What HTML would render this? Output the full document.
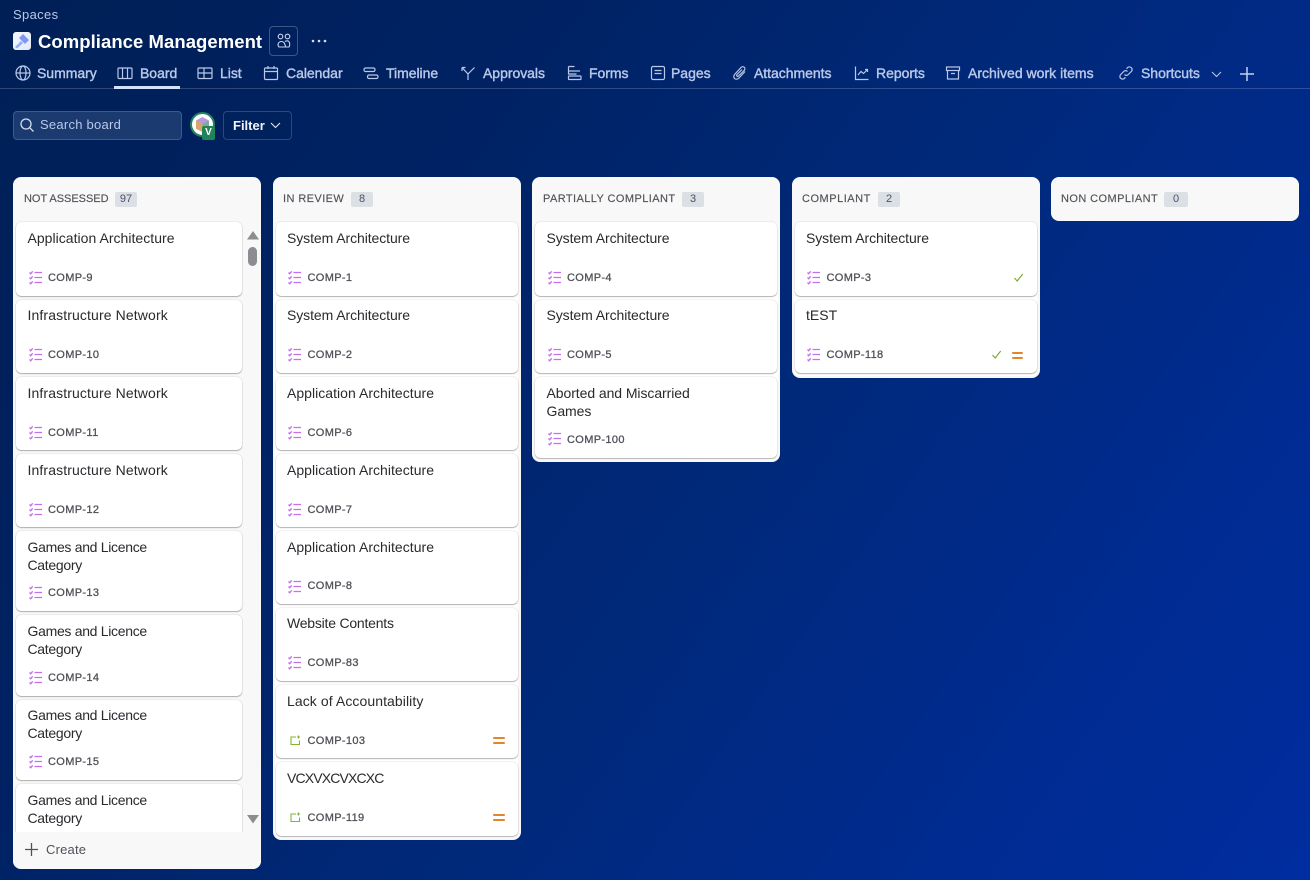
<!DOCTYPE html>
<html><head><meta charset="utf-8">
<style>
*{box-sizing:border-box;margin:0;padding:0}
html,body{width:1310px;height:880px;overflow:hidden}
body{position:relative;background:linear-gradient(125deg,#001f56 0%,#002263 28%,#00297a 55%,#002b90 80%,#002da0 100%);font-family:"Liberation Sans",sans-serif}
.a{position:absolute;white-space:nowrap}
.nav{position:absolute;top:64px;height:18px;line-height:18px;font-size:14px;font-weight:400;color:#b9c8e8;-webkit-text-stroke:.4px #b9c8e8;letter-spacing:-.03px;white-space:nowrap}
.ni{position:absolute;top:65px;width:16px;height:16px;fill:none;stroke:#b9c8e8;stroke-width:1.2}
.col{position:absolute;top:177px;width:248px;background:#f8f8f8;border-radius:8px}
.h{position:absolute;top:193px;height:12px;line-height:12px;font-size:11px;color:#505258;white-space:nowrap;letter-spacing:.42px;-webkit-text-stroke:.15px #505258}
.b{position:absolute;top:192px;height:15px;line-height:15px;border-radius:2px;background:#dcdfe4;color:#44546f;font-size:11px;text-align:center}
.c{position:absolute;background:#fff;border-radius:5px;box-shadow:0 1px 1px #00000045,0 0 1px #0000004f}
.t{position:absolute;left:11.5px;top:7px;line-height:18px;font-size:14px;color:#292a2e;letter-spacing:.03px;white-space:nowrap}
.t.u{top:6px}
.t.g{letter-spacing:-.3px}
.t.s{letter-spacing:-.08px}
.t.f{letter-spacing:.12px}
.id{position:absolute;left:32px;margin-top:1px;line-height:14px;font-size:11px;color:#505258;letter-spacing:.35px;-webkit-text-stroke:.3px #505258;white-space:nowrap}
.ic{position:absolute;left:11.5px;width:15px;height:15px;fill:none;stroke:#c470ee;stroke-width:1.35}
.st{position:absolute;left:14px;width:12px;height:12px;fill:none;stroke:#82b536;stroke-width:1.1}
.pr{position:absolute;width:11.500px;height:8px}
.pr:before,.pr:after{content:"";position:absolute;left:0;right:0;height:2px;background:#e2862d;border-radius:1px}
.pr:before{top:0}.pr:after{top:5px}
.ck{position:absolute;width:12px;height:12px;fill:none;stroke:#7da32f;stroke-width:1.1}
</style></head><body>
<svg width="0" height="0" style="position:absolute"><defs>
<g id="cl"><path d="M1.500 2.500l1.200 1.200 2-2.400M1.500 7.500l1.200 1.200 2-2.400M1.500 12.500l1.200 1.200 2-2.400M6.500 2.500h7.500M6.500 7.500h7.500M6.500 12.500h7.500"/></g>
<g id="sk"><path d="M6 2H1v7.500h8.500V5.500M8.500 .5v3M7 2h3"/></g>
<g id="ok"><path d="M1.500 6l2.700 3 5.500-7"/></g>
</defs></svg>

<div class="a" style="left:13px;top:7px;font-size:13px;line-height:16px;color:#b9c8e8;letter-spacing:.35px">Spaces</div>
<div class="a" style="left:13px;top:32px;width:18px;height:18px;background:linear-gradient(135deg,#f4f6ff,#e3e9fb);border-radius:3px"></div>
<svg class="a" style="left:13px;top:32px" width="18" height="18"><path d="M6 6l4-4 6 6-4 4z" fill="#7f97f2"/><path d="M8 9l-6 6 2 1.500 6-5.500z" fill="#97acf6"/></svg>
<div class="a" style="left:38px;top:30px;font-size:18.500px;line-height:23px;font-weight:700;color:#fff;letter-spacing:.05px">Compliance Management</div>
<div class="a" style="left:269px;top:26px;width:29px;height:30px;border:1px solid #3c5686;border-radius:4px"></div>
<svg class="a" style="left:276px;top:33px;fill:none;stroke:#c7d4ec;stroke-width:1.100" width="17" height="16"><circle cx="4.500" cy="3.500" r="2.300"/><circle cx="11.500" cy="3.500" r="2.300"/><path d="M3 14c-2-2.200-.6-5.500 2.500-5.500 1.500 0 2.500 1 3 2l1 2.700c.2.500-.2.800-.5.800zM9 8.600c.5-.5 1.300-.8 2-.8 2.500 0 3.500 3.200 2 6.200h-3.500"/></svg>
<svg class="a" style="left:311px;top:39px;fill:#d5def0" width="17" height="4"><circle cx="2" cy="2" r="1.300"/><circle cx="8" cy="2" r="1.300"/><circle cx="14" cy="2" r="1.300"/></svg>

<svg class="ni" style="left:15px"><circle cx="8" cy="8" r="7"/><ellipse cx="8" cy="8" rx="3" ry="7"/><path d="M1 8h14"/></svg><div class="nav" style="left:37px">Summary</div>
<svg class="ni" style="left:117px"><rect x="1" y="3" width="14" height="10.500" rx="1"/><path d="M5.500 3v10.500M10.500 3v10.500"/></svg><div class="nav" style="left:140px">Board</div>
<div class="a" style="left:114px;top:86px;width:66px;height:3px;background:#cfe1fd"></div>
<svg class="ni" style="left:197px"><rect x="1" y="3" width="14" height="10.500" rx="1"/><path d="M1 8h14M7 3v10.500"/></svg><div class="nav" style="left:220px">List</div>
<svg class="ni" style="left:263px"><rect x="1.500" y="3" width="13" height="11.500" rx="1"/><path d="M1.500 6.500h13M5 1v3M11 1v3"/></svg><div class="nav" style="left:286px">Calendar</div>
<svg class="ni" style="left:363px"><rect x="1" y="3" width="11" height="3.500" rx="1.500"/><rect x="4.500" y="10" width="10.500" height="3.500" rx="1.500"/><path d="M12 5h.5M4.500 12H4"/></svg><div class="nav" style="left:386px">Timeline</div>
<svg class="ni" style="left:460px"><path d="M2 2.500l6 6.500v6M14.500 2.500L8 9M2 2.500h3.500M2 2.500V6"/></svg><div class="nav" style="left:483px">Approvals</div>
<svg class="ni" style="left:567px"><path d="M1.500 1.500h6M1.500 1.500v4.500h11.500M1.500 6v3h8"/><rect x="1.500" y="11" width="12.500" height="3.500" rx=".5"/></svg><div class="nav" style="left:589px">Forms</div>
<svg class="ni" style="left:650px"><rect x="1.500" y="1.500" width="13" height="13" rx="1.500"/><path d="M4.500 5.500h7M4.500 8.500h7"/></svg><div class="nav" style="left:671px">Pages</div>
<svg class="ni" style="left:732px"><path d="M13 6.500L7 13c-1.500 1.500-3.500 1.500-4.500.5s-1-3 .5-4.500l6-6.500c1-1 2.500-1 3.300-.2s.8 2.200-.2 3.200L6.500 11c-.5.5-1.200.5-1.600.1s-.4-1.100.1-1.600L10 4.500"/></svg><div class="nav" style="left:754px">Attachments</div>
<svg class="ni" style="left:854px"><path d="M1.500 1.500v13h13M4 10l3-3.500 2.500 2L13.500 4.500M11 4.500h2.500V7"/></svg><div class="nav" style="left:876px">Reports</div>
<svg class="ni" style="left:945px"><rect x="1.500" y="2" width="13" height="3.500"/><path d="M2.500 5.500V14h11V5.500M6 8.500h4"/></svg><div class="nav" style="left:968px;letter-spacing:.02px">Archived work items</div>
<svg class="ni" style="left:1118px"><path d="M6.500 9.500c1 1.200 2.700 1.200 3.800 0l3-3c1.100-1.100 1.100-2.800 0-3.800s-2.800-1.100-3.800 0L8.500 3.700M9.500 6.500c-1-1.200-2.700-1.200-3.800 0l-3 3c-1.100 1.100-1.100 2.800 0 3.800s2.800 1.100 3.800 0l1-1"/></svg><div class="nav" style="left:1141px">Shortcuts</div>
<svg class="a" style="left:1211px;top:71px;fill:none;stroke:#b9c8e8;stroke-width:1.100" width="11" height="7"><path d="M1 1l4.500 4.500L10 1"/></svg>
<svg class="a" style="left:1239px;top:66px;fill:none;stroke:#c3d1ee;stroke-width:1.500" width="16" height="16"><path d="M8 1v14M1 8h14"/></svg>
<div class="a" style="left:0;top:88px;width:1310px;height:1px;background:#ffffff2e"></div>

<div class="a" style="left:13px;top:111px;width:169px;height:29px;background:#1b3a70;border:1px solid #3c5a8c;border-radius:4px"></div>
<svg class="a" style="left:19px;top:117px;fill:none;stroke:#d3ddf0;stroke-width:1.300" width="16" height="16"><circle cx="7" cy="7" r="5"/><path d="M10.800 10.800L14.500 14.500"/></svg>
<div class="a" style="left:40px;top:116px;font-size:13px;line-height:17px;color:#b9c8e8;letter-spacing:.25px">Search board</div>
<div class="a" style="left:190px;top:112px;width:25px;height:25px;border-radius:50%;background:#fff;border:2px solid #1f845a"></div>
<svg class="a" style="left:194px;top:116px" width="17" height="17"><path d="M8.500 1l6.500 3.500v8L8.500 16 2 12.500v-8z" fill="#b79ad6"/><path d="M2 4.500L8.500 8v8L2 12.500z" fill="#d8a56b"/><path d="M8.500 8L15 4.500v8L8.500 16z" fill="#7fa89a"/></svg>
<div class="a" style="left:202px;top:126px;width:13px;height:14px;background:#1f845a;border-radius:2px;color:#fff;font-size:10px;font-weight:700;line-height:14px;text-align:center">V</div>
<div class="a" style="left:223px;top:111px;width:69px;height:29px;border:1px solid #2c4878;border-radius:4px;background:#00225c"></div>
<div class="a" style="left:233px;top:117px;font-size:13px;line-height:17px;font-weight:700;color:#f1f4fb">Filter</div>
<svg class="a" style="left:270px;top:122px;fill:none;stroke:#e3e9f5;stroke-width:1.100" width="11" height="7"><path d="M1 1l4.500 4.500L10 1"/></svg>

<div class="col" style="left:13px;height:692px"></div>
<div class="col" style="left:273px;height:663px"></div>
<div class="col" style="left:532px;height:285px"></div>
<div class="col" style="left:792px;height:201px"></div>
<div class="col" style="left:1051px;height:44px"></div>
<div class="a" style="left:275px;top:222px;width:243px;height:616px;background:#fff;border-radius:5px"></div>
<div class="a" style="left:535px;top:222px;width:243px;height:238px;background:#fff;border-radius:5px"></div>
<div class="a" style="left:794px;top:222px;width:243px;height:154px;background:#fff;border-radius:5px"></div>

<div class="h" style="left:24px;letter-spacing:-.02px">NOT ASSESSED</div><div class="b" style="left:115px;width:22px">97</div>
<div class="h" style="left:283px">IN REVIEW</div><div class="b" style="left:351px;width:22px">8</div>
<div class="h" style="left:543px">PARTIALLY COMPLIANT</div><div class="b" style="left:682px;width:22px">3</div>
<div class="h" style="left:802px;letter-spacing:.52px">COMPLIANT</div><div class="b" style="left:878px;width:22px">2</div>
<div class="h" style="left:1061px">NON COMPLIANT</div><div class="b" style="left:1164px;width:24px">0</div>

<!-- column 1 -->
<div class="c" style="left:16px;top:222px;width:225.500px;height:74px"><div class="t">Application Architecture</div><svg class="ic" style="top:48px"><use href="#cl"/></svg><div class="id" style="top:48px">COMP-9</div></div>
<div class="c" style="left:16px;top:300px;width:225.500px;height:73px"><div class="t u f">Infrastructure Network</div><svg class="ic" style="top:47px"><use href="#cl"/></svg><div class="id" style="top:47px">COMP-10</div></div>
<div class="c" style="left:16px;top:377px;width:225.500px;height:73px"><div class="t f">Infrastructure Network</div><svg class="ic" style="top:48px"><use href="#cl"/></svg><div class="id" style="top:48px">COMP-11</div></div>
<div class="c" style="left:16px;top:454px;width:225.500px;height:73px"><div class="t f">Infrastructure Network</div><svg class="ic" style="top:48px"><use href="#cl"/></svg><div class="id" style="top:48px">COMP-12</div></div>
<div class="c" style="left:16px;top:531px;width:225.500px;height:80px"><div class="t g">Games and Licence<br>Category</div><svg class="ic" style="top:54px"><use href="#cl"/></svg><div class="id" style="top:54px">COMP-13</div></div>
<div class="c" style="left:16px;top:615px;width:225.500px;height:80.500px"><div class="t g">Games and Licence<br>Category</div><svg class="ic" style="top:55px"><use href="#cl"/></svg><div class="id" style="top:55px">COMP-14</div></div>
<div class="c" style="left:16px;top:700px;width:225.500px;height:80px"><div class="t u g">Games and Licence<br>Category</div><svg class="ic" style="top:54px"><use href="#cl"/></svg><div class="id" style="top:54px">COMP-15</div></div>
<div class="c" style="left:16px;top:784px;width:225.500px;height:80px"><div class="t g">Games and Licence<br>Category</div></div>
<div class="a" style="left:13px;top:832px;width:248px;height:37px;background:#f8f8f8;border-radius:0 0 8px 8px"></div>
<svg class="a" style="left:24px;top:842px;fill:none;stroke:#505258;stroke-width:1.300" width="15" height="15"><path d="M7.500 1v13M1 7.500h13"/></svg>
<div class="a" style="left:46px;top:841px;font-size:13px;line-height:17px;color:#505258;letter-spacing:.2px">Create</div>
<svg class="a" style="left:246px;top:230px" width="14" height="11"><path d="M7 1l6 8.500H1z" fill="#8b8d90"/></svg>
<div class="a" style="left:248px;top:247px;width:9px;height:19px;border-radius:4.500px;background:#8b8d90"></div>
<svg class="a" style="left:246px;top:814px" width="14" height="11"><path d="M1 1h12L7 9.500z" fill="#8b8d90"/></svg>

<!-- column 2 -->
<div class="c" style="left:275.500px;top:222px;width:242px;height:74px"><div class="t s">System Architecture</div><svg class="ic" style="top:48px"><use href="#cl"/></svg><div class="id" style="top:48px">COMP-1</div></div>
<div class="c" style="left:275.500px;top:300px;width:242px;height:73px"><div class="t u s">System Architecture</div><svg class="ic" style="top:47px"><use href="#cl"/></svg><div class="id" style="top:47px">COMP-2</div></div>
<div class="c" style="left:275.500px;top:377px;width:242px;height:73px"><div class="t">Application Architecture</div><svg class="ic" style="top:48px"><use href="#cl"/></svg><div class="id" style="top:48px">COMP-6</div></div>
<div class="c" style="left:275.500px;top:454px;width:242px;height:73px"><div class="t">Application Architecture</div><svg class="ic" style="top:48px"><use href="#cl"/></svg><div class="id" style="top:48px">COMP-7</div></div>
<div class="c" style="left:275.500px;top:531px;width:242px;height:73px"><div class="t">Application Architecture</div><svg class="ic" style="top:48px"><use href="#cl"/></svg><div class="id" style="top:47px">COMP-8</div></div>
<div class="c" style="left:275.500px;top:608px;width:242px;height:73px"><div class="t u" style="letter-spacing:-.22px">Website Contents</div><svg class="ic" style="top:47px"><use href="#cl"/></svg><div class="id" style="top:47px">COMP-83</div></div>
<div class="c" style="left:275.500px;top:685px;width:242px;height:73px"><div class="t" style="letter-spacing:.08px">Lack of Accountability</div><svg class="st" style="top:50px"><use href="#sk"/></svg><div class="id" style="top:48px">COMP-103</div><div class="pr" style="left:217.500px;top:52px"></div></div>
<div class="c" style="left:275.500px;top:762px;width:242px;height:74px"><div class="t" style="letter-spacing:-.85px">VCXVXCVXCXC</div><svg class="st" style="top:50px"><use href="#sk"/></svg><div class="id" style="top:48px">COMP-119</div><div class="pr" style="left:217.500px;top:52px"></div></div>

<!-- column 3 -->
<div class="c" style="left:535px;top:222px;width:242px;height:74px"><div class="t s">System Architecture</div><svg class="ic" style="top:48px"><use href="#cl"/></svg><div class="id" style="top:48px">COMP-4</div></div>
<div class="c" style="left:535px;top:300px;width:242px;height:73px"><div class="t u s">System Architecture</div><svg class="ic" style="top:47px"><use href="#cl"/></svg><div class="id" style="top:47px">COMP-5</div></div>
<div class="c" style="left:535px;top:377px;width:242px;height:81px"><div class="t" style="letter-spacing:-.07px">Aborted and Miscarried<br>Games</div><svg class="ic" style="top:54px"><use href="#cl"/></svg><div class="id" style="top:55px">COMP-100</div></div>

<!-- column 4 -->
<div class="c" style="left:794.500px;top:222px;width:242px;height:74px"><div class="t s">System Architecture</div><svg class="ic" style="top:48px"><use href="#cl"/></svg><div class="id" style="top:48px">COMP-3</div><svg class="ck" style="left:218px;top:50px"><use href="#ok"/></svg></div>
<div class="c" style="left:794.500px;top:300px;width:242px;height:73px"><div class="t u">tEST</div><svg class="ic" style="top:47px"><use href="#cl"/></svg><div class="id" style="top:47px">COMP-118</div><svg class="ck" style="left:196px;top:49px"><use href="#ok"/></svg><div class="pr" style="left:217px;top:52px"></div></div>
</body></html>
